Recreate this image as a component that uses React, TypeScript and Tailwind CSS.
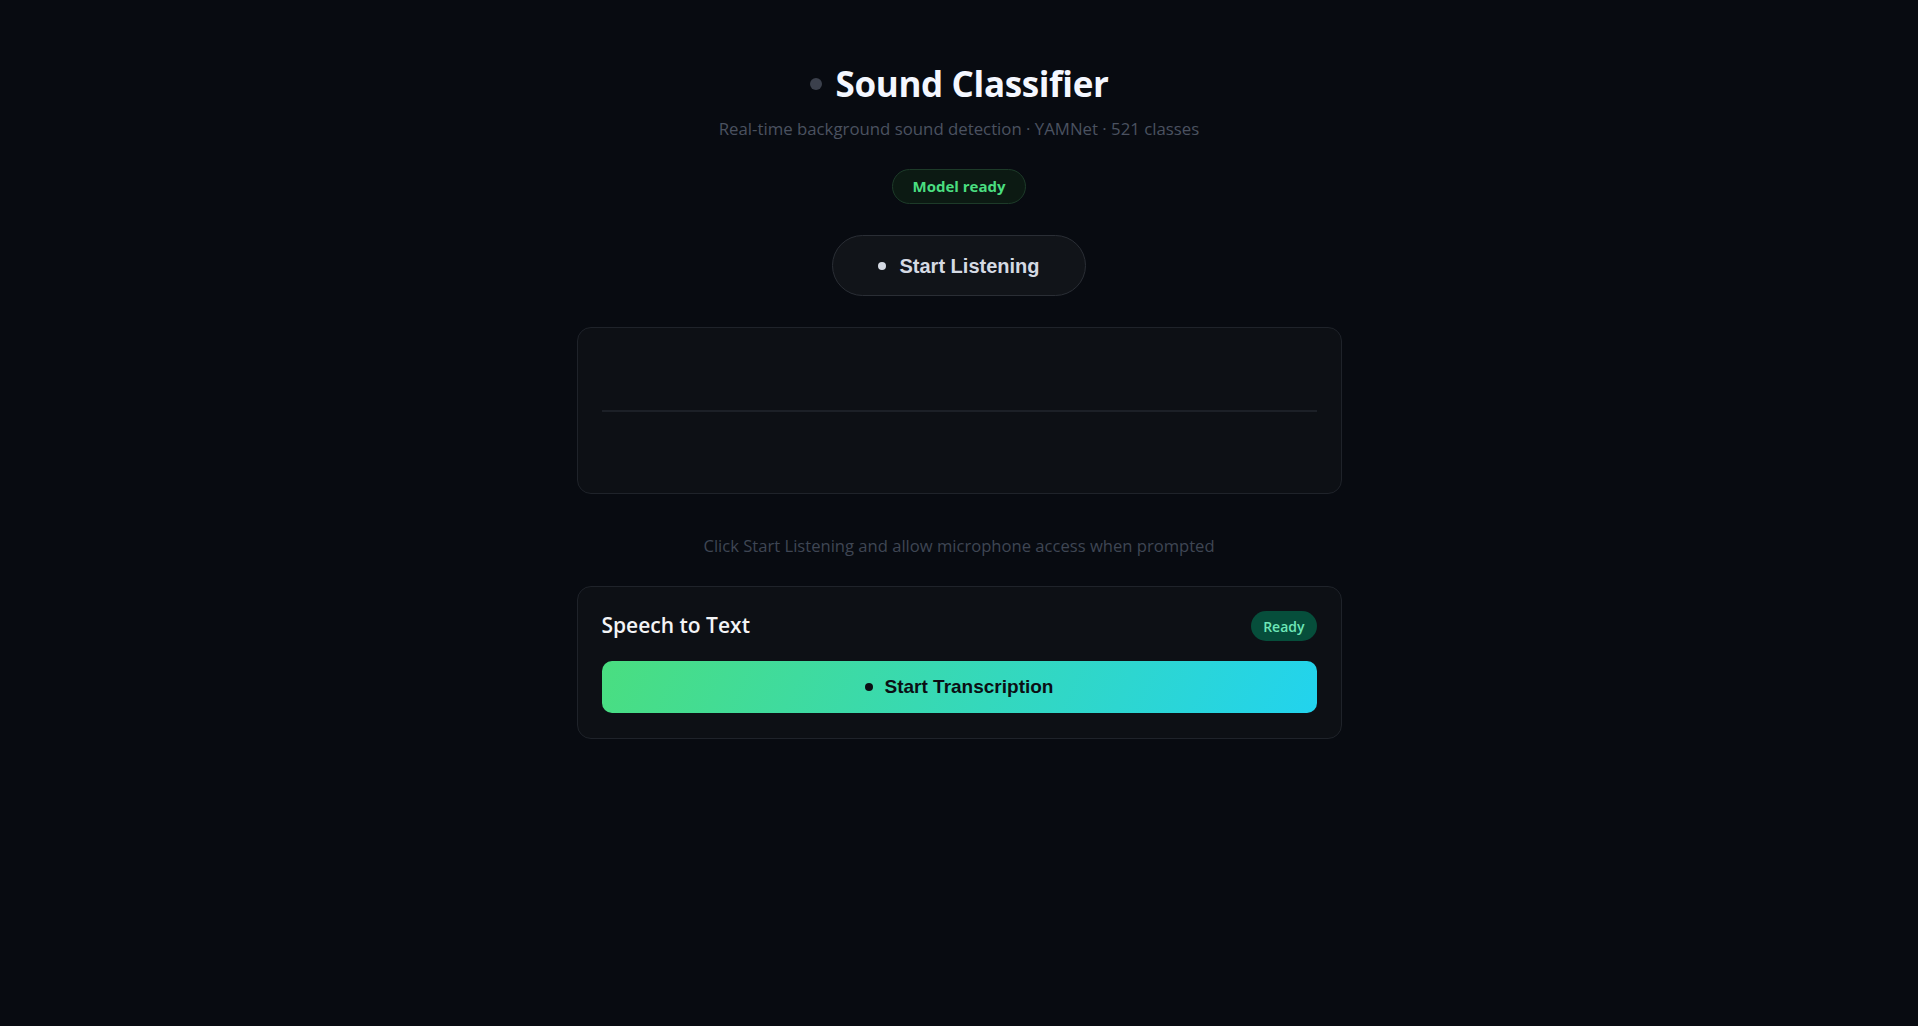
import React, { useState } from 'react';

const sans = "font-['Segoe_UI','Open_Sans',sans-serif]";
const arial = "font-['Liberation_Sans',Arial,sans-serif]";

const Waveform = () => (
  <div className="rounded-[14px] border border-[#1f232a] bg-[#0d1015] p-6">
    <div className="flex h-[117px] items-center">
      <div className="h-[2px] w-full bg-[#1c2027]" />
    </div>
  </div>
);

const SpeechPanel = () => (
  <div className="rounded-[14px] border border-[#1f232a] bg-[#0d1015] px-6 pt-6 pb-[25px]">
    <div className="flex h-[30px] items-center justify-between">
      <h2 className={`${sans} text-[21px] font-semibold text-[#f3f4f6]`}>Speech to Text</h2>
      <span className={`${sans} flex h-[30px] items-center rounded-full bg-[#064e3b] px-3 text-[14px] font-semibold text-[#6ee7b7]`}>
        Ready
      </span>
    </div>
    <button
      className={`${arial} mt-5 flex h-[52px] w-full items-center justify-center gap-3 rounded-[10px] bg-[linear-gradient(115deg,#4ade80,#22d3ee)] text-[19px] font-bold text-[#0b0f14]`}
    >
      <span className="h-2 w-2 rounded-full bg-[#0b0f14]" />
      Start Transcription
    </button>
  </div>
);

export default function App() {
  const [listening, setListening] = useState(false);

  return (
    <div className={`${sans} min-h-screen bg-[#080b11]`}>
      <main className="mx-auto flex w-[765px] flex-col items-center pt-[61px]">
        <div className="flex items-center gap-[14px]">
          <span className="h-3 w-3 rounded-full bg-[#3b404c]" />
          <h1 className="text-[35px] font-bold leading-[46px] tracking-[-0.01em] text-[#f4f7ff]">Sound Classifier</h1>
        </div>
        <p className="mt-[10px] text-[16.8px] leading-6 text-[#4b5260]">
          Real-time background sound detection · YAMNet · 521 classes
        </p>

        <span className="mt-[28px] flex h-[35px] items-center rounded-full border border-[#1d3b29] bg-[#0c1a13] px-[19px] text-[15px] font-bold text-[#4ade80]">
          Model ready
        </span>

        <button
          onClick={() => setListening(!listening)}
          className={`${arial} mt-[31px] flex h-[61px] w-[254px] items-center justify-center gap-[13px] rounded-full border border-[#2a2e35] bg-[#111419] text-[20px] font-bold text-[#d5dae3]`}
        >
          <span className="h-2 w-2 rounded-full bg-[#d5dae3]" />
          {listening ? 'Stop Listening' : 'Start Listening'}
        </button>

        <div className="mt-[31px] w-full">
          <Waveform />
        </div>

        <p className="mt-[40px] text-[16.6px] leading-6 text-[#3f4654]">
          Click Start Listening and allow microphone access when prompted
        </p>

        <div className="mt-[28px] w-full">
          <SpeechPanel />
        </div>
      </main>
    </div>
  );
}
